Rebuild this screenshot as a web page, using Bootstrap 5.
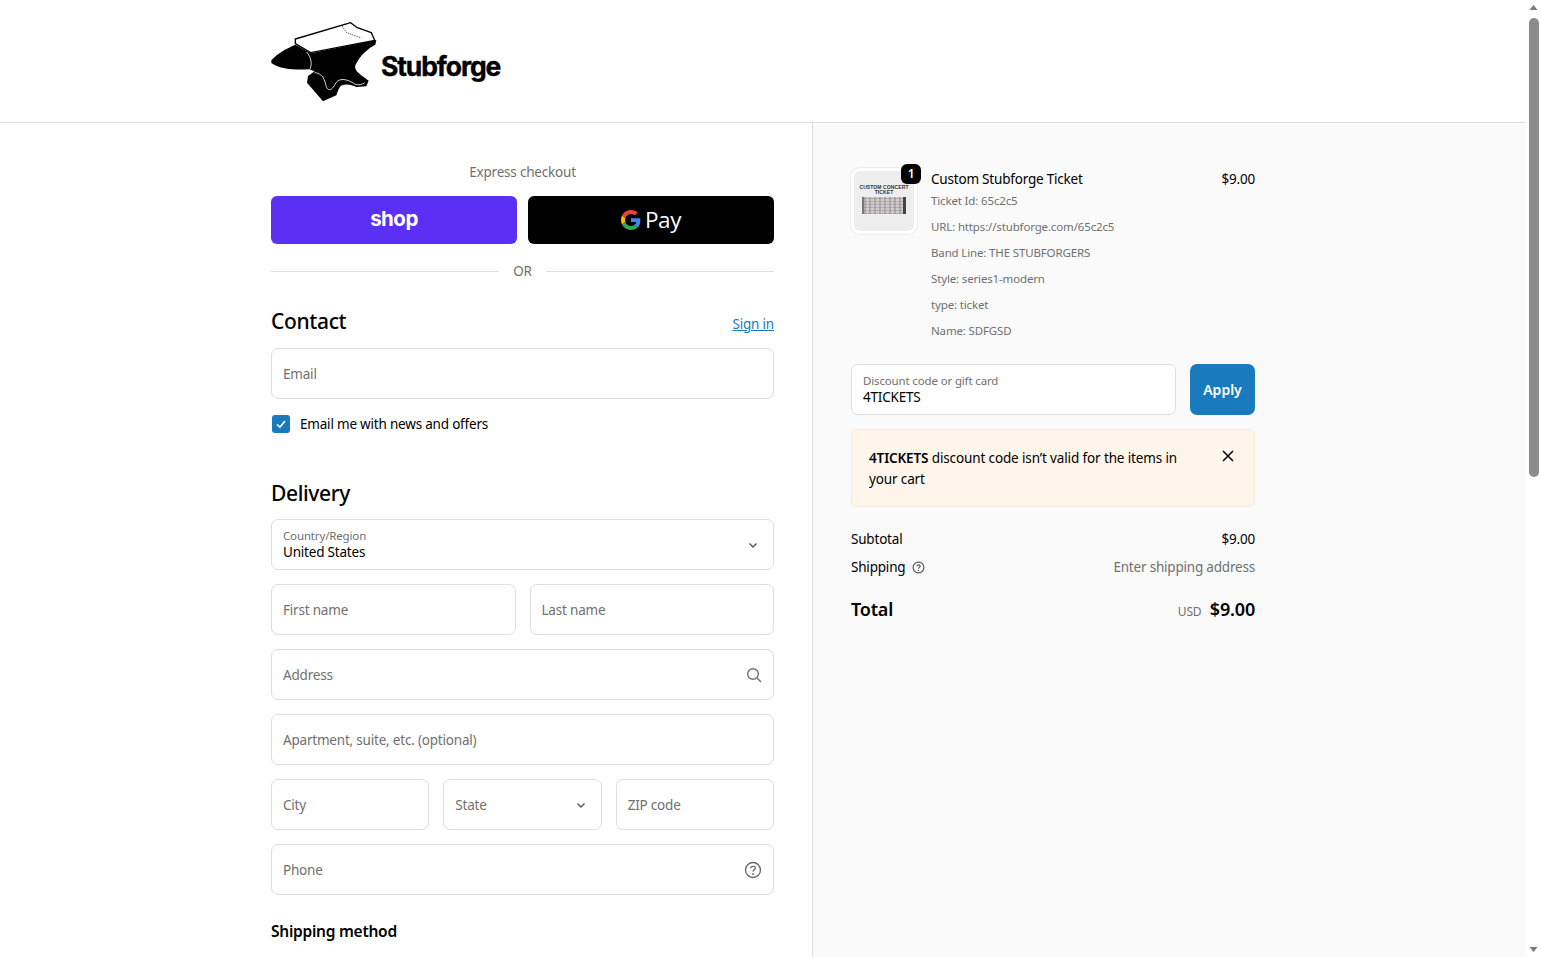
<!DOCTYPE html>
<html lang="en">
<head>
    <meta charset="UTF-8">
    <meta name="viewport" content="width=device-width, initial-scale=1.0">
    <title>Checkout - Stubforge</title>
    <link href="https://cdn.jsdelivr.net/npm/bootstrap@5.3.0/dist/css/bootstrap.min.css" rel="stylesheet">
    <style>
        html, body {
            height: 100%;
            overflow: hidden;
        }

        body {
            font-family: "Noto Sans", "Open Sans", sans-serif;
            font-size: 13.5px;
            letter-spacing: -0.2px;
            color: #000;
            background: #fff;
        }

        .page-wrap {
            height: 957px;
            overflow: hidden;
        }

        .page-main {
            width: 1526px;
            height: 957px;
            flex: none;
        }

        .shop-head {
            height: 123px;
            padding-left: 268px;
            padding-top: 16px;
            border-bottom: 1px solid #dedede;
        }

        .logo-word {
            font-family: Inter, "Liberation Sans", sans-serif;
            font-weight: 700;
            font-size: 26.5px;
            letter-spacing: -1.1px;
            line-height: 1;
            margin: 37px 0 0 1px;
            -webkit-text-stroke: 0.4px #000;
        }

        .body-row {
            height: 834px;
        }

        .col-form {
            width: 813px;
            flex: none;
            padding: 41px 38px 0 271px;
            border-right: 1px solid #dedede;
        }

        .col-summary {
            flex: 1;
            background: #fafafa;
            padding: 45px 0 0 38px;
        }

        .summary-inner {
            width: 404px;
        }

        .express-label {
            color: #707070;
            line-height: 16px;
            margin-bottom: 16px;
        }

        .pay-btn {
            width: 246px;
            height: 48px;
            border: 0;
            border-radius: 6px;
            padding: 0;
            color: #fff;
        }

        .pay-shop {
            background: #5a31f4;
            font-family: Inter, sans-serif;
            font-weight: 700;
            font-size: 20.5px;
            letter-spacing: -0.5px;
            padding-bottom: 2px;
        }

        .pay-google {
            background: #000;
            font-family: "Open Sans", sans-serif;
            font-size: 22.5px;
            letter-spacing: -0.4px;
        }

        .or-row {
            color: #707070;
            margin-top: 17px;
            line-height: 20px;
            height: 20px;
        }

        .or-line {
            height: 1px;
            background: #dedede;
        }

        .or-text {
            padding: 0 6px;
        }

        .section-title {
            font-size: 21px;
            font-weight: 500;
            letter-spacing: -0.35px;
            line-height: 28px;
            margin: 0;
        }

        .sign-link {
            color: #197bbd;
            text-decoration: underline;
            margin-bottom: 1px;
        }

        .field {
            height: 51px;
            border: 1px solid #dedede;
            border-radius: 7px;
            background: #fff;
            padding: 1px 11px 0;
            color: #707070;
        }

        .field-stack {
            line-height: 17px;
            padding-bottom: 2px;
        }

        .field-stack small {
            display: block;
            font-size: 11.5px;
            letter-spacing: -0.15px;
            color: #707070;
        }

        .field-stack span {
            display: block;
            color: #000;
        }

        .field-icon {
            color: #707070;
            flex: none;
        }

        .field-chevron {
            flex: none;
            margin-right: 2px;
        }

        .field-gap {
            gap: 14px;
        }

        .news-check {
            margin-top: 14px;
            gap: 10px;
        }

        .news-text {
            padding-top: 1px;
        }

        .news-box {
            width: 18px;
            height: 18px;
            margin-left: 1px;
            border-radius: 3px;
            background: #197bbd;
        }

        .ship-title {
            font-size: 15.5px;
            font-weight: 600;
            letter-spacing: -0.25px;
            line-height: 22px;
            margin: 25px 0 0;
        }

        .thumb-wrap {
            width: 66px;
            height: 66px;
            flex: none;
        }

        .thumb-box {
            width: 66px;
            height: 66px;
            border: 3px solid #fff;
            box-shadow: 0 0 0 1px #ececec;
            border-radius: 9px;
            background: #eeeeee;
            padding-top: 14px;
        }

        .thumb-text {
            font-family: "Liberation Sans", sans-serif;
            font-weight: 700;
            font-size: 5px;
            line-height: 5px;
            letter-spacing: 0.1px;
            text-align: center;
            color: #333;
        }

        .thumb-ticket {
            width: 44px;
            height: 17px;
            margin: 2px auto 0;
            background:
                repeating-linear-gradient(90deg, rgba(110, 100, 105, 0.3) 0 2px, transparent 2px 5px),
                repeating-linear-gradient(0deg, rgba(90, 80, 85, 0.22) 0 1px, transparent 1px 3px),
                #cfcbcd;
            border-right: 3px solid #444;
            border-left: 2px solid #777;
        }

        .qty-pill {
            position: absolute;
            top: -4px;
            right: -4px;
            width: 20px;
            height: 20px;
            border-radius: 6px;
            background: #000;
            color: #fff;
            font-size: 12px;
            font-weight: 600;
            line-height: 20px;
            text-align: center;
        }

        .item-meta {
            font-size: 11.5px;
            letter-spacing: -0.15px;
            color: #707070;
            line-height: 26px;
        }

        .item-first {
            line-height: 22px;
            height: 24px;
        }

        .item-name {
            line-height: 22px;
        }

        .apply-btn {
            width: 65px;
            height: 51px;
            background: #197bbd;
            color: #fff;
            border: 0;
            border-radius: 7px;
            font-weight: 600;
            font-size: 14px;
        }

        .notice-box {
            background: #fff5ea;
            border: 1px solid #f7ead6;
            border-radius: 6px;
            padding: 18px 19px 16px 17px;
            line-height: 21px;
            letter-spacing: -0.13px;
            margin-top: 14px;
            height: 78px;
        }

        .notice-box b {
            font-weight: 600;
        }

        .notice-text {
            width: 320px;
        }

        .notice-close {
            margin-top: 1px;
        }

        .sum-row {
            line-height: 20px;
        }

        .sum-muted {
            color: #707070;
        }

        .sum-total {
            font-size: 18px;
            font-weight: 600;
            line-height: 26px;
            letter-spacing: -0.2px;
            margin-top: 19px;
        }

        .sum-cur {
            font-size: 12px;
            font-weight: 400;
            color: #707070;
            margin-right: 4px;
        }

        .help-gap {
            gap: 7px;
        }

        .fake-scroll {
            width: 15px;
            height: 957px;
            flex: none;
            background: #fff;
        }

        .scroll-thumb {
            width: 10px;
            height: 459px;
            margin: 0 auto;
            border-radius: 5px;
            background: #8c8c8c;
        }
    </style>
</head>
<body>
    <div class="page-wrap d-flex">
        <div class="page-main">
            <header class="shop-head d-flex align-items-start">
                <svg width="112" height="88" viewBox="0 0 336 264">
                    <path d="M10 133 C28 112 55 98 82 86 L128 112 L325 72 L322 86 C300 98 278 115 262 148 C258 162 270 172 302 194 L295 211 L265 213 C250 205 235 203 222 208 C212 214 210 226 205 238 L165 256 L117 200 L120 180 L140 166 L122 160 C90 162 38 162 10 141 Z" fill="#000"/>
                    <path d="M82 69 L248 20 L268 35 L310 50 L320 73 L128 110 L82 83 Z" fill="#fff" stroke="#000" stroke-width="4" stroke-linejoin="round"/>
                    <path d="M222 30 L236 50 L280 66" fill="none" stroke="#000" stroke-width="2" stroke-dasharray="4 3"/>
                    <path d="M116 108 C130 125 134 145 124 164 M140 170 C165 172 170 192 175 212 C180 228 194 222 204 200 C216 184 240 190 262 205 C272 208 282 206 290 200" fill="none" stroke="#fff" stroke-width="2.500"/>
                </svg>
                <div class="logo-word">Stubforge</div>
            </header>
            <div class="body-row d-flex">
                <main class="col-form">
                    <div class="express-label text-center">Express checkout</div>
                    <div class="d-flex justify-content-between">
                        <button class="pay-btn pay-shop" type="button">shop</button>
                        <button class="pay-btn pay-google d-flex align-items-center justify-content-center gap-1" type="button">
                            <svg width="20" height="20" viewBox="0 0 48 48">
                                <path fill="#EA4335" d="M24 9.500c3.500 0 6.700 1.200 9.200 3.600l6.900-6.900C35.900 2.400 30.500 0 24 0 14.600 0 6.500 5.400 2.600 13.200l8 6.200C12.500 13.700 17.800 9.500 24 9.500z"/>
                                <path fill="#4285F4" d="M46.500 24.500c0-1.600-.1-3.100-.4-4.500H24v9h12.700c-.6 3-2.200 5.400-4.700 7.100l7.700 6c4.500-4.100 6.800-10.200 6.800-17.600z"/>
                                <path fill="#FBBC05" d="M10.500 28.600c-.5-1.400-.8-3-.8-4.600s.3-3.200.8-4.600l-8-6.200C.9 16.500 0 20.100 0 24s.9 7.500 2.600 10.800l7.900-6.200z"/>
                                <path fill="#34A853" d="M24 48c6.500 0 11.900-2.100 15.900-5.800l-7.700-6c-2.200 1.500-4.900 2.300-8.200 2.300-6.200 0-11.500-4.200-13.400-9.900l-8 6.200C6.500 42.600 14.600 48 24 48z"/>
                            </svg>
                            <span>Pay</span>
                        </button>
                    </div>
                    <div class="or-row d-flex align-items-center gap-2">
                        <div class="or-line flex-grow-1"></div>
                        <div class="or-text">OR</div>
                        <div class="or-line flex-grow-1"></div>
                    </div>
                    <div class="d-flex justify-content-between align-items-end" style="margin-top:26px">
                        <h2 class="section-title">Contact</h2>
                        <a class="sign-link" href="#">Sign in</a>
                    </div>
                    <div class="field d-flex align-items-center" style="margin-top:13px">Email</div>
                    <div class="news-check d-flex align-items-center">
                        <div class="news-box d-flex align-items-center justify-content-center">
                            <svg width="12" height="12" viewBox="0 0 12 12"><path d="M2 6.500 L5 9 L10 3" fill="none" stroke="#fff" stroke-width="1.600"/></svg>
                        </div>
                        <div class="news-text">Email me with news and offers</div>
                    </div>
                    <h2 class="section-title" style="margin-top:45px">Delivery</h2>
                    <div class="d-flex flex-column field-gap" style="margin-top:12px">
                        <div class="field d-flex align-items-center justify-content-between">
                            <div class="field-stack"><small>Country/Region</small><span>United States</span></div>
                            <svg class="field-chevron" width="14" height="14" viewBox="0 0 14 14"><path d="M3.500 5.500 L7 9 L10.500 5.500" fill="none" stroke="#555" stroke-width="1.400"/></svg>
                        </div>
                        <div class="d-flex field-gap">
                            <div class="field d-flex align-items-center w-100">First name</div>
                            <div class="field d-flex align-items-center w-100">Last name</div>
                        </div>
                        <div class="field d-flex align-items-center justify-content-between">
                            <span>Address</span>
                            <svg class="field-icon" width="16" height="16" viewBox="0 0 16 16"><circle cx="7" cy="7" r="5.300" fill="none" stroke="#707070" stroke-width="1.400"/><path d="M11 11 L15 15" stroke="#707070" stroke-width="1.400"/></svg>
                        </div>
                        <div class="field d-flex align-items-center">Apartment, suite, etc. (optional)</div>
                        <div class="d-flex field-gap">
                            <div class="field d-flex align-items-center w-100">City</div>
                            <div class="field d-flex align-items-center justify-content-between w-100">
                                <span>State</span>
                                <svg class="field-chevron" width="14" height="14" viewBox="0 0 14 14"><path d="M3.500 5.500 L7 9 L10.500 5.500" fill="none" stroke="#555" stroke-width="1.400"/></svg>
                            </div>
                            <div class="field d-flex align-items-center w-100">ZIP code</div>
                        </div>
                        <div class="field d-flex align-items-center justify-content-between">
                            <span>Phone</span>
                            <svg class="field-icon" width="18" height="18" viewBox="0 0 18 18"><circle cx="9" cy="9" r="7.500" fill="none" stroke="#666" stroke-width="1.300"/><path d="M6.700 7.200 C6.800 4.600 11.300 4.700 11.300 7.200 C11.300 8.800 9 8.900 9 10.600" fill="none" stroke="#666" stroke-width="1.300"/><circle cx="9" cy="13" r="0.900" fill="#666"/></svg>
                        </div>
                    </div>
                    <h3 class="ship-title">Shipping method</h3>
                </main>
                <aside class="col-summary">
                    <div class="summary-inner">
                        <div class="d-flex">
                            <div class="thumb-wrap position-relative">
                                <div class="thumb-box">
                                    <div class="thumb-text">CUSTOM CONCERT<br>TICKET</div>
                                    <div class="thumb-ticket"></div>
                                </div>
                                <div class="qty-pill">1</div>
                            </div>
                            <div class="flex-grow-1" style="margin-left:14px">
                                <div class="d-flex justify-content-between item-name"><span>Custom Stubforge Ticket</span><span>$9.00</span></div>
                                <div class="item-meta">
                                    <div class="item-first">Ticket Id: 65c2c5</div>
                                    <div>URL: https://stubforge.com/65c2c5</div>
                                    <div>Band Line: THE STUBFORGERS</div>
                                    <div>Style: series1-modern</div>
                                    <div>type: ticket</div>
                                    <div>Name: SDFGSD</div>
                                </div>
                            </div>
                        </div>
                        <div class="d-flex field-gap" style="margin-top:20px">
                            <div class="field d-flex align-items-center flex-grow-1">
                                <div class="field-stack"><small>Discount code or gift card</small><span>4TICKETS</span></div>
                            </div>
                            <button class="apply-btn" type="button">Apply</button>
                        </div>
                        <div class="notice-box d-flex justify-content-between">
                            <div class="notice-text"><b>4TICKETS</b> discount code isn’t valid for the items in your cart</div>
                            <svg class="notice-close" width="14" height="14" viewBox="0 0 14 14"><path d="M2 2 L12 12 M12 2 L2 12" stroke="#000" stroke-width="1.500"/></svg>
                        </div>
                        <div class="sum-row d-flex justify-content-between" style="margin-top:22px"><span>Subtotal</span><span>$9.00</span></div>
                        <div class="sum-row d-flex justify-content-between" style="margin-top:8px">
                            <span class="d-flex align-items-center help-gap">Shipping
                                <svg width="13" height="13" viewBox="0 0 18 18"><circle cx="9" cy="9" r="7.500" fill="none" stroke="#555" stroke-width="1.600"/><path d="M6.700 7.200 C6.800 4.600 11.300 4.700 11.300 7.200 C11.300 8.800 9 8.900 9 10.600" fill="none" stroke="#555" stroke-width="1.600"/><circle cx="9" cy="13" r="1" fill="#555"/></svg>
                            </span>
                            <span class="sum-muted">Enter shipping address</span>
                        </div>
                        <div class="sum-total d-flex justify-content-between align-items-baseline">
                            <span>Total</span>
                            <span><span class="sum-cur">USD</span> $9.00</span>
                        </div>
                    </div>
                </aside>
            </div>
        </div>
        <div class="fake-scroll d-flex flex-column">
            <svg class="d-block mx-auto" width="9" height="18" viewBox="0 0 9 18"><path d="M0.500 10 L4.500 5 L8.500 10 Z" fill="#7a7a7a"/></svg>
            <div class="scroll-thumb"></div>
            <svg class="d-block mx-auto mt-auto" width="9" height="18" viewBox="0 0 9 18"><path d="M0.500 8 L4.500 13 L8.500 8 Z" fill="#7a7a7a"/></svg>
        </div>
    </div>
    <script src="https://cdn.jsdelivr.net/npm/bootstrap@5.3.0/dist/js/bootstrap.bundle.min.js"></script>
</body>
</html>
